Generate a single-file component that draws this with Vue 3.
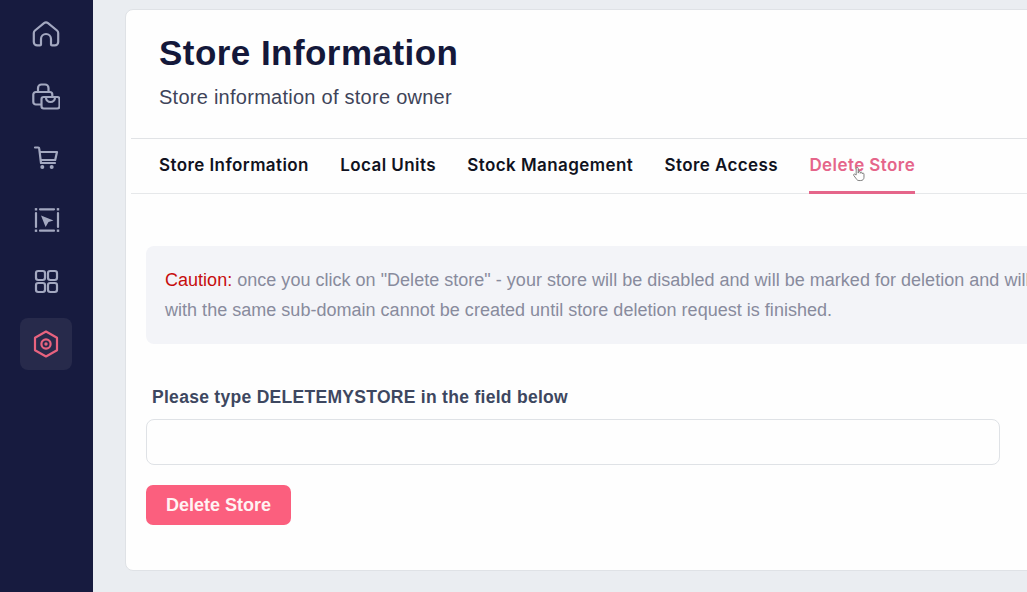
<script setup>
const tabs = ['Store Information', 'Local Units', 'Stock Management', 'Store Access', 'Delete Store']
</script>

<template>
  <div class="page">
    <aside class="side">
      <div class="nav">
        <svg viewBox="0 0 28 28" width="28" height="28"><path d="M3 10.500 12 3.200a3.200 3.200 0 0 1 4 0l9 7.300a3.400 3.400 0 0 1 1.200 2.600V22a3.400 3.400 0 0 1-3.400 3.400H20a1 1 0 0 1-1-1V19a5 5 0 0 0-10 0v5.400a1 1 0 0 1-1 1H5.200A3.400 3.400 0 0 1 1.800 22v-8.900a3.400 3.400 0 0 1 1.200-2.600Z" /></svg>
      </div>
      <div class="nav">
        <svg viewBox="0 0 28 28" width="28" height="28"><path d="M6 10V6a3.500 3.500 0 0 1 3.500-3.500h3.500A3.500 3.500 0 0 1 16.500 6v4" /><path d="M8.500 22.500H3.800a2.500 2.500 0 0 1-2.500-2.500v-7.500A2.500 2.500 0 0 1 3.800 10h14a2.500 2.500 0 0 1 2.500 2.500V15" /><rect x="9.500" y="15" width="18" height="11.500" rx="2.200" /><path d="M14 15.500a4.500 4.500 0 0 0 9 0" /></svg>
      </div>
      <div class="nav">
        <svg viewBox="0 0 28 28" width="28" height="28"><path d="M3 3.500h3.200a1 1 0 0 1 1 .9L9 19h14" /><path d="M8 8h17l-1.800 8H9" /><circle cx="10.300" cy="23" r="2" class="dot" /><circle cx="19.700" cy="23" r="2" class="dot" /></svg>
      </div>
      <div class="nav">
        <svg viewBox="0 0 28 28" width="28" height="28"><path d="M8 3.300h14M8 24.700h14M4 7v14M26 7v14" /><rect x="2.800" y="2.100" width="2.400" height="2.400" class="dot" /><rect x="24.800" y="2.100" width="2.400" height="2.400" class="dot" /><rect x="2.800" y="23.500" width="2.400" height="2.400" class="dot" /><rect x="24.800" y="23.500" width="2.400" height="2.400" class="dot" /><path d="M9 9.500 21.500 14.500l-5 1.600-2.900 5Z" class="dot" /></svg>
      </div>
      <div class="nav">
        <svg viewBox="0 0 28 28" width="28" height="28"><rect x="4" y="3" width="9" height="9" rx="2.200" /><rect x="16" y="3" width="9" height="9" rx="2.200" /><rect x="4" y="15" width="9" height="9" rx="2.200" /><rect x="16" y="15" width="9" height="9" rx="2.200" /></svg>
      </div>
      <div class="nav active">
        <svg viewBox="0 0 28 28" width="28" height="28"><path d="M14 1.500 25 7.700v12.600L14 26.500 3 20.300V7.700Z" /><circle cx="14" cy="14" r="4.600" /><circle cx="14" cy="14" r="1.700" class="core" /></svg>
      </div>
    </aside>

    <main class="main">
      <section class="card">
        <header class="head">
          <h1>Store Information</h1>
          <p>Store information of store owner</p>
        </header>
        <nav class="tabs">
          <a v-for="t in tabs" :key="t" class="tab" :class="{ on: t === 'Delete Store' }">{{ t }}</a>
          <svg class="hand" viewBox="0 0 14 18" width="13" height="17"><path d="M4.500 9.500V2.500a1.100 1.100 0 0 1 2.200 0V7.500l.2-1a1 1 0 0 1 2 .2v1l.2-.6a1 1 0 0 1 1.900.3v1l.2-.3a.9.900 0 0 1 1.700.5v3.400c0 2-1.200 3.500-3.500 3.500H7.500c-1.500 0-2.300-.8-3-2L1.800 9.900c-.6-1.100.8-1.900 1.600-1Z" /></svg>
        </nav>
        <div class="body">
          <div class="caution">
            <div><span class="red">Caution:</span> once you click on "Delete store" - your store will be disabled and will be marked for deletion and will</div>
            <div>with the same sub-domain cannot be created until store deletion request is finished.</div>
          </div>
          <label class="lab" for="confirm">Please type DELETEMYSTORE in the field below</label>
          <input id="confirm" class="field" type="text" />
          <button class="btn" type="button">Delete Store</button>
        </div>
      </section>
    </main>
  </div>
</template>

<style>
html, body { margin: 0; overflow: hidden; }
</style>

<style scoped>
.page {
  display: flex;
  width: 1027px;
  height: 592px;
  overflow: hidden;
  background: #eaedf1;
  font-family: "Liberation Sans", Arial, sans-serif;
}
.side {
  flex: 0 0 93px;
  box-sizing: border-box;
  background: #171b3f;
  padding: 8px 1px 0 0;
  display: flex;
  flex-direction: column;
  align-items: center;
  gap: 10px;
}
.nav {
  width: 52px;
  height: 52px;
  border-radius: 8px;
  display: flex;
  align-items: center;
  justify-content: center;
  flex: none;
}
.nav svg {
  fill: none;
  stroke: #a3a8c0;
  stroke-width: 2.200;
  stroke-linecap: round;
  stroke-linejoin: round;
}
.nav .dot { fill: #a3a8c0; stroke: none; }
.nav.active { background: #272a4b; }
.nav.active svg { stroke: #e8637f; }
.nav.active svg .core { fill: #e8637f; stroke: none; }
.main {
  flex: 1;
  min-width: 0;
  padding: 9px 0 21px 32px;
}
.card {
  box-sizing: border-box;
  width: 1000px;
  height: 562px;
  background: #fefefe;
  border: 1px solid #dfe2e6;
  border-radius: 8px;
  padding-left: 5px;
}
.head { padding: 26px 0 0 28px; height: 102px; box-sizing: content-box; }
h1 {
  margin: 0;
  font-size: 35px;
  line-height: 34px;
  font-weight: 700;
  color: #14183a;
  letter-spacing: 0.45px;
}
.head p {
  margin: 15px 0 0;
  font-size: 20px;
  line-height: 24px;
  color: #3e4459;
  letter-spacing: 0.26px;
}
.tabs {
  position: relative;
  display: flex;
  gap: 31.300px;
  height: 54px;
  padding-left: 28px;
  border-top: 1px solid #e1e3e6;
  border-bottom: 1px solid #e6e8ea;
}
.tab {
  box-sizing: border-box;
  height: 55px;
  line-height: 52px;
  font-family: Inter, "Liberation Sans", sans-serif;
  font-size: 17px;
  font-weight: 600;
  color: #101220;
  letter-spacing: 0.42px;
}
.tab.on {
  color: #e5658a;
  border-bottom: 3px solid #e5658a;
}
.hand {
  position: absolute;
  left: 721px;
  top: 27px;
  fill: #fff;
  stroke: #777;
  stroke-width: 1;
}
.body { padding: 52px 0 0 15px; }
.caution {
  box-sizing: border-box;
  width: 1000px;
  height: 98px;
  padding: 19px 0 0 19px;
  background: #f3f4f8;
  border-radius: 8px;
  font-size: 18px;
  line-height: 30px;
  color: #888b9d;
  white-space: nowrap;
  letter-spacing: 0.02px;
}
.red { color: #c70d0d; }
.lab {
  display: block;
  margin: 43px 0 0 6px;
  height: 21px;
  font-size: 17.500px;
  line-height: 21px;
  font-weight: 700;
  color: #3d4760;
  letter-spacing: 0.29px;
}
.field {
  display: block;
  box-sizing: border-box;
  margin-top: 11px;
  width: 854px;
  height: 46px;
  background: #fefefe;
  border: 1px solid #dfe2e6;
  border-radius: 8px;
  outline: none;
}
.btn {
  display: block;
  box-sizing: border-box;
  margin-top: 20px;
  width: 145px;
  height: 40px;
  background: #fb5f7e;
  color: #fff3f3;
  border: none;
  border-radius: 7px;
  font-family: inherit;
  font-size: 18px;
  font-weight: 700;
  padding: 0;
}
</style>
